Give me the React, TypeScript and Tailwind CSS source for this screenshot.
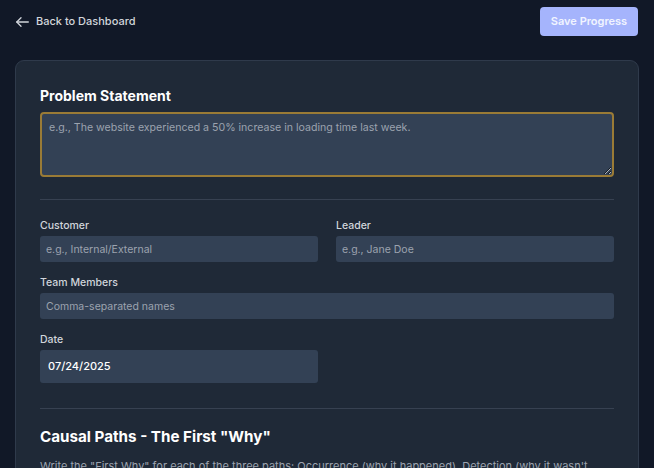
import React from "react";

export default function App() {
  return (
    <div className="h-[468px] w-full overflow-hidden bg-[#111827] font-['Inter',sans-serif] text-white">
      <div className="flex items-center justify-between pl-4 pr-4 pt-[7px]">
        <div className="flex items-center gap-[7px] text-[11px] font-medium text-[#d1d5db]">
          <svg width="13" height="10" viewBox="0 0 13 10" fill="none" stroke="currentColor" strokeWidth="1.3" strokeLinecap="round" strokeLinejoin="round">
            <path d="M12.3 5H0.8" />
            <path d="M5 0.8L0.8 5L5 9.2" />
          </svg>
          <span>Back to Dashboard</span>
        </div>
        <button className="h-[29px] w-[98px] rounded-[4px] bg-[#a5b4fc] text-[11px] font-semibold text-[#f1f4ff]">
          Save Progress
        </button>
      </div>
      <div className="mx-[15px] mt-[24px] rounded-[9px] border border-[#2f3a4b] bg-[#1f2937] px-6 pt-[25px] pb-6">
        <h2 className="text-[14px] font-bold leading-[20px] text-white">Problem Statement</h2>
        <textarea
          className="mt-[6px] block h-[65px] w-full resize-y rounded-[4px] border-2 border-[#9a7b36] bg-[#334155] px-[7px] py-[6px] text-[10.6px] text-white outline-none placeholder:text-[#9ca3af]"
          placeholder="e.g., The website experienced a 50% increase in loading time last week."
        />
        <div className="mt-[22px] border-t border-[#374151]" />
        <div className="mt-[19px] grid grid-cols-2 gap-x-[18px]">
          <div>
            <label className="block text-[10.5px] font-medium leading-[14px] text-[#d1d5db]">Customer</label>
            <input
              className="mt-[3px] block h-[26px] w-full rounded-[3px] bg-[#334155] px-[6px] text-[10.5px] text-white outline-none placeholder:text-[#9ca3af]"
              placeholder="e.g., Internal/External"
            />
          </div>
          <div>
            <label className="block text-[10.5px] font-medium leading-[14px] text-[#d1d5db]">Leader</label>
            <input
              className="mt-[3px] block h-[26px] w-full rounded-[3px] bg-[#334155] px-[6px] text-[10.5px] text-white outline-none placeholder:text-[#9ca3af]"
              placeholder="e.g., Jane Doe"
            />
          </div>
        </div>
        <div className="mt-[14px]">
          <label className="block text-[10.5px] font-medium leading-[14px] text-[#d1d5db]">Team Members</label>
          <input
            className="mt-[3px] block h-[26px] w-full rounded-[3px] bg-[#334155] px-[6px] text-[10.5px] text-white outline-none placeholder:text-[#9ca3af]"
            placeholder="Comma-separated names"
          />
        </div>
        <div className="mt-[14px] grid grid-cols-2 gap-x-[18px]">
          <div>
            <label className="block text-[10.5px] font-medium leading-[14px] text-[#d1d5db]">Date</label>
            <div className="mt-[3px] flex h-[33px] w-full items-center rounded-[3px] bg-[#334155] px-[8px] text-[11px] font-medium text-white">
              07/24/2025
            </div>
          </div>
        </div>
        <div className="mt-[25px] border-t border-[#374151]" />
        <h2 className="mt-[18px] text-[15.2px] font-bold leading-[20px] text-white">Causal Paths - The First "Why"</h2>
        <p className="mt-[12px] text-[11px] leading-[15px] text-[#9ca3af]">
          Write the "First Why" for each of the three paths: Occurrence (why it happened), Detection (why it wasn't caught), and Systemic (why the system allowed it).
        </p>
      </div>
    </div>
  );
}
